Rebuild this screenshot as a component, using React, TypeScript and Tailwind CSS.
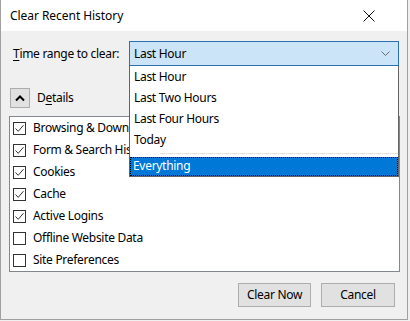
const items = [
  { label: "Browsing & Download History", checked: true },
  { label: "Form & Search History", checked: true },
  { label: "Cookies", checked: true },
  { label: "Cache", checked: true },
  { label: "Active Logins", checked: true },
  { label: "Offline Website Data", checked: false },
  { label: "Site Preferences", checked: false },
];

const ranges = ["Last Hour", "Last Two Hours", "Last Four Hours", "Today"];

function CheckBox({ checked }: { checked: boolean }) {
  return (
    <span className="flex h-[13px] w-[13px] shrink-0 items-center justify-center border border-[#333333] bg-white">
      {checked && (
        <svg width="11" height="11" viewBox="0 0 11 11">
          <path d="M1.5 5.5 L4.2 8.3 L9.5 2.2" fill="none" stroke="#333333" strokeWidth="1" />
        </svg>
      )}
    </span>
  );
}

export default function App() {
  return (
    <div className="h-[321px] w-[410px] bg-[#f0f0f0] text-[12px] leading-none text-black" style={{ fontFamily: '"Noto Sans", sans-serif' }}>
      <div className="flex h-[320px] w-[408px] flex-col border-x border-b border-[#a0a0a0] bg-[#f0f0f0]">
        {/* title bar */}
        <div className="flex h-[31px] shrink-0 items-center bg-white pl-[9px]">
          <span className="pt-[1px] tracking-[-0.05px]">Clear Recent History</span>
          <svg className="ml-auto mr-[32px] mt-[1px]" width="12" height="12" viewBox="0 0 12 12">
            <path d="M0.5 0.5 L11.5 11.5 M11.5 0.5 L0.5 11.5" stroke="#111111" strokeWidth="1" />
          </svg>
        </div>

        <div className="flex flex-col tracking-[-0.3px]">
          {/* time range */}
          <div className="mt-[10px] flex items-center pl-[12px]">
            <span className="w-[116px]">
              <span className="underline underline-offset-2">T</span>ime range to clear:
            </span>
            <div className="relative">
              <div className="flex h-[25px] w-[270px] items-center border border-[#2b70b0] bg-[#cce4f7] pl-[4px] pr-[8px]">
                <span>Last Hour</span>
                <svg className="ml-auto" width="9" height="6" viewBox="0 0 9 6">
                  <path d="M0.5 0.5 L4.5 4.5 L8.5 0.5" fill="none" stroke="#6b6b6b" strokeWidth="1" />
                </svg>
              </div>
              <div className="absolute left-0 top-full z-10 flex h-[111px] w-[270px] flex-col border border-t-0 border-[#646464] bg-white">
                {ranges.map((r) => (
                  <div key={r} className="flex h-[21px] shrink-0 items-center pl-[4px]">
                    {r}
                  </div>
                ))}
                <div className="ml-[30px] mt-[3px] h-px bg-[#e4e4e4]" />
                <div className="mt-[3px] flex h-[21px] items-center bg-[#0078d7] pl-[3px] text-white outline outline-1 outline-dotted outline-black -outline-offset-1">
                  Everything
                </div>
              </div>
            </div>
          </div>

          {/* details */}
          <div className="mt-[22px] flex items-center pl-[9px]">
            <div className="flex h-[20px] w-[20px] items-center justify-center border border-[#adadad] bg-[#e1e1e1]">
              <svg width="10" height="7" viewBox="0 0 10 7">
                <path d="M1 5.5 L5 1.5 L9 5.5" fill="none" stroke="#000000" strokeWidth="2" />
              </svg>
            </div>
            <span className="ml-[7px]">
              D<span className="underline underline-offset-2">e</span>tails
            </span>
          </div>

          {/* list; the open dropdown covers the long labels */}
          <div className="ml-[8px] mt-[8px] flex w-[391px] flex-col border border-[#828790] bg-white">
            {items.map((it) => (
              <div key={it.label} className="flex h-[22px] items-center pl-[3px]">
                <CheckBox checked={it.checked} />
                <span className="ml-[7px] whitespace-nowrap">{it.label}</span>
              </div>
            ))}
          </div>

          {/* buttons */}
          <div className="mt-[11px] flex justify-end gap-[10px] pr-[12px]">
            <button className="h-[24px] w-[73px] border border-[#adadad] bg-[#e1e1e1]">Clear Now</button>
            <button className="h-[24px] w-[74px] border border-[#adadad] bg-[#e1e1e1]">Cancel</button>
          </div>
        </div>
      </div>
    </div>
  );
}
